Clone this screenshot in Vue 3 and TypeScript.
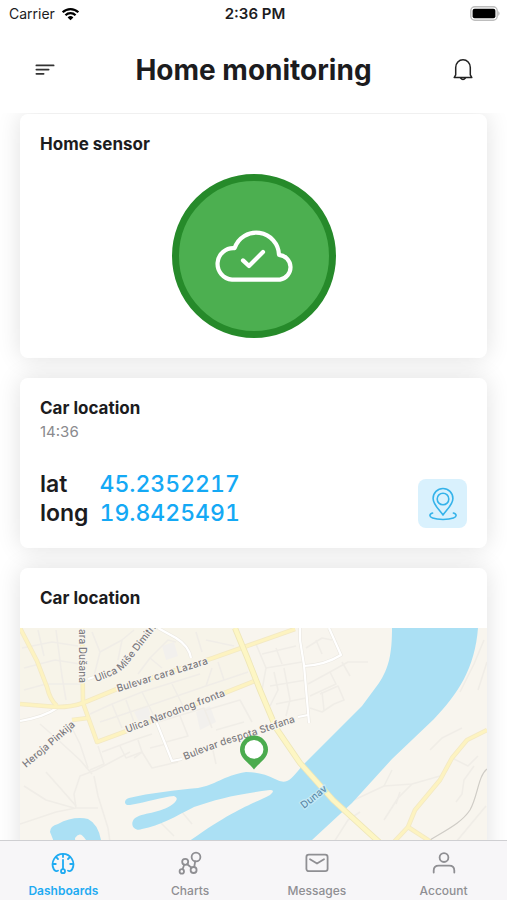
<script setup lang="ts">
import { ref } from 'vue'

type TabId = 'dashboards' | 'charts' | 'messages' | 'account'

interface Tab {
  id: TabId
  label: string
}

const tabs: Tab[] = [
  { id: 'dashboards', label: 'Dashboards' },
  { id: 'charts', label: 'Charts' },
  { id: 'messages', label: 'Messages' },
  { id: 'account', label: 'Account' },
]

const activeTab = ref<TabId>('dashboards')

const position = [
  { key: 'lat', value: '45.2352217' },
  { key: 'long', value: '19.8425491' },
]

// Minor streets, drawn faintly under the main road network
const minorStreets: string[] = [
  'M22 648 L52 642 L78 646', 'M24 668 L55 660 L80 664', 'M38 630 L44 656', 'M56 630 L62 676 L66 700',
  'M24 690 L46 684 L80 684', 'M92 632 L100 652 L94 676', 'M100 652 L122 640 L134 630', 'M122 640 L118 660',
  'M138 674 L150 658 L168 640 L176 642', 'M150 658 L162 668', 'M196 632 L202 652', 'M206 640 L234 646',
  'M90 714 L112 704 L142 692 L200 674', 'M112 704 L122 728', 'M142 692 L156 720', 'M172 684 L184 708',
  'M100 722 L148 706 L206 686 L248 672', 'M206 686 L212 668', 'M224 680 L218 662', 'M126 700 L134 722',
  'M98 746 L104 764 L90 770', 'M102 752 L134 740 L152 734', 'M120 746 L126 758 L142 752 L138 740',
  'M134 758 L142 752 L152 768 L178 762', 'M150 748 L166 744', 'M158 722 L204 708 L212 728',
  'M180 716 L188 736 L166 742', 'M206 710 L240 700 L252 722', 'M216 730 L244 722', 'M212 746 L216 764',
  'M40 724 L56 738 L80 760 L92 774', 'M70 724 L80 744 L88 768', 'M24 786 L46 800 L74 808',
  'M46 772 L62 790 L76 806', 'M20 824 L56 812 L76 808 L98 808', 'M130 752 L96 770 L80 776 L74 794 L76 808',
  'M94 776 L98 796 L108 828 L110 842', 'M160 822 L174 836', 'M182 812 L192 824', 'M256 644 L266 668 L262 690',
  'M266 668 L302 662', 'M262 654 L296 646', 'M276 648 L282 664', 'M274 672 L278 690 L270 706', 'M284 668 L290 700',
  'M270 686 L306 680', 'M276 704 L306 698', 'M290 700 L286 716', 'M306 648 L322 638 L332 640', 'M316 640 L322 654',
  'M308 684 L330 672 L348 662 L368 662', 'M330 672 L336 684 L310 696', 'M342 662 L350 676', 'M320 694 L338 686 L344 700 L334 704',
  'M310 708 L322 712 L334 704', 'M322 692 L324 710', 'M484 640 L474 664 L460 692', 'M487 662 L478 690',
  'M354 800 L384 786 L412 784 L440 776', 'M384 786 L392 770', 'M412 784 L398 798 L384 820', 'M400 792 L396 804',
  'M430 750 L442 738 L462 728', 'M452 758 L468 766 L478 756', 'M474 766 L464 780 L462 794 L456 802',
  'M486 806 L466 830 L456 842', 'M334 842 L348 820 L360 812',
]

const whiteStreets: string[] = [
  'M300 628 L300 640 L304 665 L307 700 L309 723',
  'M329 628 L341 655 Q325 665 304 666',
  'M158 628 L176 638 Q189 646 191 658',
  'M156 721 L172 761 L182 759',
  'M20 721 Q44 717 57 708',
  'M88 679 L94 677',
  'M298 717 L308 715',
]

const mainRoads: string[] = [
  'M20 628 L37 661 L47 687 Q50 700 57 706',
  'M20 704 L57 707 Q72 707 83 703 L117 689 L213 658 L295 629',
  'M82 628 L83 703 L97 742 L124 732 L227 692 L257 680',
  'M72 720 L88 718',
  'M408 827 L428 840 L440 852',
  'M487 730 L467 740 L452 758 L440 780 L415 810 L408 827 L394 842',
]

const avenue = 'M235 628 L247 657 L260 690 L276 728 L300 763 L333 800 L379 842 L400 862'
</script>

<template>
  <div class="app">
    <div class="status">
      <div class="carrier">
        <span>Carrier</span>
        <svg class="wifi" viewBox="0 0 20 15" aria-hidden="true">
          <path d="M1.6 5.6 A12 12 0 0 1 18.4 5.6" />
          <path d="M4.6 8.8 A7.6 7.6 0 0 1 15.4 8.8" />
          <path class="wifi-dot" d="M10 14.2 L6.9 11.2 A4.4 4.4 0 0 1 13.1 11.2 Z" />
        </svg>
      </div>
      <div class="clock">2:36 PM</div>
      <div class="battery">
        <svg viewBox="0 0 31 15" aria-hidden="true">
          <rect x="0.8" y="0.8" width="26.4" height="13.4" rx="4" fill="#fff" stroke="#bdbdbd" stroke-width="1.4" />
          <rect x="2.6" y="2.8" width="22.8" height="9.4" rx="2" fill="#000" />
          <path d="M28.4 5 Q30.6 7.5 28.4 10 Z" fill="#a8a8a8" />
        </svg>
      </div>
    </div>

    <header class="header">
      <button class="icon-button" type="button" aria-label="Menu">
        <svg viewBox="0 0 24 24" aria-hidden="true">
          <path d="M4.4 7.4 H21.6 M4.4 11.6 H16.6 M4.4 15.8 H11.6" stroke="#333" stroke-width="1.8" stroke-linecap="round" />
        </svg>
      </button>
      <h1>Home monitoring</h1>
      <button class="icon-button" type="button" aria-label="Notifications">
        <svg viewBox="0 0 24 24" aria-hidden="true" fill="none" stroke="#222" stroke-width="1.5" stroke-linejoin="round">
          <path d="M4.7 16.8 V9.4 A7.3 7.7 0 0 1 19.3 9.4 V16.8 L20.8 19.6 H3.2 Z" />
          <path d="M9.4 19.8 Q12 23.2 14.6 19.8" />
        </svg>
      </button>
    </header>

    <main class="content">
      <section class="card">
        <h2>Home sensor</h2>
        <div class="sensor">
          <svg viewBox="0 0 80 54" aria-hidden="true" fill="none" stroke="#fff" stroke-width="4.2" stroke-linecap="round" stroke-linejoin="round">
            <path d="M18 50.6 A15.4 15.4 0 1 1 20.6 19.2 A22.8 22.8 0 0 1 65 25.8 A12.5 12.5 0 0 1 66 50.6 Z" />
            <path d="M29 31.4 L35 37 L49 23" />
          </svg>
        </div>
      </section>

      <section class="card">
        <h2>Car location</h2>
        <p class="time">14:36</p>
        <div class="position">
          <dl>
            <template v-for="row in position" :key="row.key">
              <dt>{{ row.key }}</dt>
              <dd>{{ row.value }}</dd>
            </template>
          </dl>
          <button class="locate" type="button" aria-label="Show on map">
            <svg viewBox="0 0 32 34" aria-hidden="true" fill="none" stroke="#35b3ea" stroke-width="1.6" stroke-linejoin="round" stroke-linecap="round">
              <path d="M16 28 C13 23.4 6.1 17.6 6.1 11.4 A9.9 9.9 0 0 1 25.9 11.4 C25.9 17.6 19 23.4 16 28 Z" />
              <circle cx="16" cy="12" r="5.8" />
              <path d="M5.6 26 C2 27.2 2 29.6 5.6 31 C10.6 32.9 21.4 32.9 26.4 31 C30 29.6 30 27.2 26.4 26" />
            </svg>
          </button>
        </div>
      </section>

      <section class="card map-card">
        <h2>Car location</h2>
        <svg class="map" viewBox="20 628 467 240" preserveAspectRatio="xMidYMin slice" role="img" aria-label="Map">
          <defs>
            <path id="street-dimitri" d="M96 682 C111 676 121 673 128 664 C137 652 145 642 152 633 L177 602" />
            <path id="street-lazara" d="M118 692 L214 662" />
            <path id="street-fronta" d="M127 733 L230 694" />
            <path id="street-stefana" d="M185 760 Q224 744 250 737 L304 719" />
            <path id="street-heroja" d="M26 768 L80 722" />
            <path id="street-dusana" d="M79 629 V700" />
            <path id="river-dunav" d="M304 809 L334 785" />
          </defs>
          <rect x="20" y="628" width="467" height="240" fill="#f8f5ee" />
          <path d="M20 628 H236 L256 682 L97 742 L83 703 L20 706 Z" fill="#f7f4e9" />
          <path d="M196 712 L210 706 L216 722 L200 730 Z M162 646 L174 642 L178 656 L166 660 Z M134 712 L148 706 L152 720 L140 724 Z" fill="#f2f0ed" />
          <g class="minor">
            <path v-for="d in minorStreets" :key="d" :d="d" />
          </g>
          <g fill="#abe0f4">
            <path
              d="M392 628 C392 654 389 668 379 683 L362 706 L302 766 Q291 780 287 781 Q282 783 275 779 Q262 772 246 772 C222 776 216 785 198 788 C176 790 150 793 129 798 C123 800 124 806 130 805 C148 802 162 797 174 796 Q180 798 173 804 C160 814 142 812 134 819 C129 826 136 832 142 829 C160 826 176 816 194 807 C216 799 238 794 270 790 Q276 790 270 795 C258 802 238 806 188 842 L150 868 H282 L312 840 L352 803 L392 759 L434 719 C458 694 475 668 478 628 Z"
            />
            <path d="M50 832 Q50 826 58 824 C68 818 80 817 88 819 Q98 824 101 840 L106 868 H94 L86 840 Q80 830 75 838 L77 868 H62 Q56 846 50 832 Z" />
          </g>
          <path d="M430 840 C450 828 462 822 470 810 C478 796 478 776 487 769" fill="none" stroke="#cfccc6" stroke-width="1.2" />
          <g class="white-case">
            <path v-for="d in whiteStreets" :key="d" :d="d" />
          </g>
          <g class="white">
            <path v-for="d in whiteStreets" :key="d" :d="d" />
          </g>
          <g class="road-case">
            <path v-for="d in mainRoads" :key="d" :d="d" />
          </g>
          <g class="road">
            <path v-for="d in mainRoads" :key="d" :d="d" />
          </g>
          <path :d="avenue" fill="none" stroke="#eee6b8" stroke-width="6" />
          <path :d="avenue" fill="none" stroke="#fdf6c4" stroke-width="4.4" />
          <g class="labels">
            <text><textPath href="#street-dusana">ara Dušana</textPath></text>
            <text><textPath href="#street-dimitri">Ulica Miše Dimitri</textPath></text>
            <text><textPath href="#street-lazara">Bulevar cara Lazara</textPath></text>
            <text><textPath href="#street-fronta">Ulica Narodnog fronta</textPath></text>
            <text><textPath href="#street-stefana">Bulevar despota Stefana</textPath></text>
            <text><textPath href="#street-heroja">Heroja Pinkija</textPath></text>
            <text class="water"><textPath href="#river-dunav">Dunav</textPath></text>
          </g>
          <path d="M254 769.4 C249 763 240 758.5 240 749.6 A14 14 0 0 1 268 749.6 C268 758.5 259 763 254 769.4 Z" fill="#4bab4e" />
          <circle cx="254" cy="749.4" r="9.4" fill="#fff" />
        </svg>
      </section>
    </main>

    <nav class="tabs" aria-label="Main">
      <button
        v-for="tab in tabs"
        :key="tab.id"
        type="button"
        class="tab"
        :class="{ active: tab.id === activeTab }"
        @click="activeTab = tab.id"
      >
        <svg viewBox="0 0 24 24" aria-hidden="true">
          <template v-if="tab.id === 'dashboards'">
            <path d="M7 19.6 C5.6 20.8 3.6 19.8 2.7 18 A10.4 10.4 0 1 1 21.3 18 C20.4 19.8 18.4 20.8 17 19.6" />
            <path d="M12 9 V18 M12 3 V6 M5.2 6.2 L7 8 M18.8 6.2 L17 8 M2 13 H4.8 M22 13 H19.2" />
            <circle cx="12" cy="20.2" r="2" />
          </template>
          <template v-else-if="tab.id === 'charts'">
            <circle cx="18" cy="6" r="4.4" />
            <circle cx="7.2" cy="10.8" r="3" />
            <circle cx="3.8" cy="20.4" r="2.2" />
            <circle cx="15.6" cy="19" r="3" />
            <path d="M6.2 13.8 L4.6 18.2 M9.2 13.2 L13.6 16.8 M17.2 10.4 L16.2 16" />
          </template>
          <template v-else-if="tab.id === 'messages'">
            <rect x="1.4" y="3.6" width="21.2" height="16.6" rx="2.4" />
            <path d="M5 8.2 L12 12.6 L19 8.2" />
          </template>
          <template v-else>
            <circle cx="12" cy="6.6" r="4.4" />
            <path d="M1.7 21.6 V19.6 Q1.7 14.6 6.8 14.6 H17.2 Q22.3 14.6 22.3 19.6 V21.6" />
          </template>
        </svg>
        <span>{{ tab.label }}</span>
      </button>
    </nav>
  </div>
</template>

<style>
body {
  background: #fff;
}
</style>

<style scoped>
.app {
  display: flex;
  flex-direction: column;
  height: 100vh;
  overflow: hidden;
  background: #fff;
  color: #1c1c1e;
  font-family: Inter, "Liberation Sans", sans-serif;
}

button {
  margin: 0;
  padding: 0;
  border: 0;
  background: none;
  font: inherit;
  cursor: pointer;
}

.status {
  display: grid;
  grid-template-columns: 1fr auto 1fr;
  align-items: center;
  height: 27px;
  padding: 0 6px 0 9px;
  font-size: 14px;
}

.carrier {
  display: flex;
  align-items: center;
  gap: 6px;
}

.wifi {
  width: 19px;
  height: 14px;
  fill: none;
  stroke: #000;
  stroke-width: 2.4;
}

.wifi .wifi-dot {
  fill: #000;
  stroke: none;
}

.clock {
  font-size: 15px;
  font-weight: 600;
}

.battery {
  display: flex;
  justify-content: flex-end;
}

.battery svg {
  width: 31px;
  height: 15px;
}

.header {
  display: flex;
  align-items: center;
  justify-content: space-between;
  height: 86px;
  padding: 0 32px;
}

.icon-button {
  display: flex;
}

.icon-button svg {
  width: 24px;
  height: 24px;
}

h1 {
  margin: 0;
  font-size: 28px;
  line-height: 36px;
  font-weight: 700;
}

.content {
  display: flex;
  flex: 1;
  flex-direction: column;
  gap: 20px;
  min-height: 0;
  padding: 1px 20px 20px;
  overflow-y: auto;
  scrollbar-width: none;
}

.card {
  flex: none;
  padding: 20px;
  border-radius: 8px;
  background: #fff;
  box-shadow: 0 0 24px rgba(0, 0, 0, 0.12);
}

h2 {
  margin: 0;
  font-size: 17px;
  line-height: 20px;
  font-weight: 700;
}

.sensor {
  display: flex;
  align-items: center;
  justify-content: center;
  box-sizing: border-box;
  width: 164px;
  height: 164px;
  margin: 20px auto 0;
  border: 7px solid #268a2a;
  border-radius: 50%;
  background: #4caf50;
}

.sensor svg {
  width: 80px;
  height: 54px;
}

.time {
  margin: 4px 0 0;
  color: #8a8a8e;
  font-size: 15px;
  line-height: 20px;
}

.position {
  display: flex;
  align-items: flex-end;
  justify-content: space-between;
  margin-top: 28px;
}

dl {
  display: grid;
  grid-template-columns: auto auto;
  column-gap: 11px;
  margin: 0;
  font-size: 23px;
  line-height: 29px;
  font-weight: 500;
}

dt {
  font-weight: 600;
}

dd {
  margin: 0;
  color: #14a9f5;
  font-variant-numeric: tabular-nums;
}

.locate {
  display: flex;
  align-items: center;
  justify-content: center;
  width: 49px;
  height: 49px;
  border-radius: 8px;
  background: #d9f1fd;
}

.locate svg {
  width: 32px;
  height: 34px;
}

.map-card {
  padding: 0;
  overflow: hidden;
}

.map-card h2 {
  padding: 20px;
}

.map {
  display: block;
  width: 100%;
  height: 240px;
}

.minor,
.white,
.white-case,
.road,
.road-case {
  fill: none;
  stroke-linejoin: round;
}

.minor {
  stroke: #f0ede7;
  stroke-width: 1.6;
}

.white-case {
  stroke: #ebe8e1;
  stroke-width: 3.4;
}

.white {
  stroke: #fff;
  stroke-width: 2.2;
}

.road-case {
  stroke: #f3e9c4;
  stroke-width: 4.6;
}

.road {
  stroke: #fdf3c0;
  stroke-width: 3;
}

.labels {
  fill: #7c7a7e;
  stroke: #f8f5ee;
  stroke-width: 2.4;
  paint-order: stroke;
  font-size: 10px;
  font-weight: 500;
}

.labels .water {
  fill: #5d8ba8;
  stroke: #c4e9f6;
}

.tabs {
  display: flex;
  flex: none;
  height: 59px;
  border-top: 1px solid #cfcfd2;
  background: #f7f6f8;
}

.tab {
  display: flex;
  flex: 1;
  flex-direction: column;
  align-items: center;
  gap: 8px;
  padding-top: 10px;
  color: #8f8f93;
  font-size: 12px;
  line-height: 15px;
  font-weight: 500;
}

.tab svg {
  width: 24px;
  height: 24px;
  fill: none;
  stroke: currentColor;
  stroke-width: 1.8;
  stroke-linecap: round;
  stroke-linejoin: round;
}

.tab.active {
  color: #1fabf2;
  font-weight: 600;
}
</style>
